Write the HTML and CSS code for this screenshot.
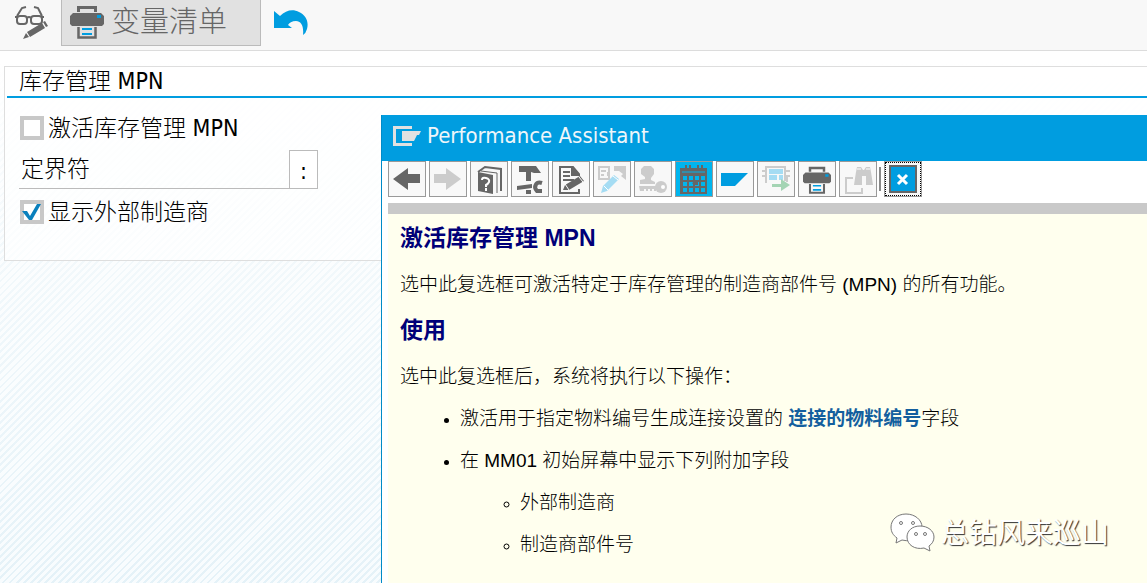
FILE: index.html
```html
<!DOCTYPE html>
<html lang="zh-CN">
<head>
<meta charset="utf-8">
<title>库存管理 MPN</title>
<link rel="stylesheet" href="styles.css">
</head>
<body>
<svg class="defs" aria-hidden="true">
  <symbol id="printer" viewBox="0 0 34 34">
    <path fill="#666" d="M7 7V1h20v6h-3V4H10v3zM3 8h28l3 3v8l-2 2h-3H5H2l-2-2v-8z"/>
    <path fill="#009de0" d="M27 10h4v3h-4zM12 23h10v2H12zM12 28h10v2H12z"/>
    <path fill="none" stroke="#666" stroke-width="2.500" d="M8.500 22v10.500h17V22"/>
  </symbol>
</svg>
<header class="toolbar">
  <button class="tool" aria-label="显示/更改">
    <svg width="34" height="36" viewBox="0 0 34 36" fill="none" stroke="#666" stroke-width="2">
      <path d="M2 12 7 4l4-1M27 12l-4-8-4-1"/>
      <rect x="2" y="12" width="10" height="8" rx="3"/><rect x="16" y="12" width="11" height="8" rx="3"/>
      <path d="M0 13h3M12 14q2-2 4 0M27 13h2"/>
      <path fill="#666" stroke="none" d="m12 28 15-9 3 5-15 9zM28 18l2-1 3 5-2 1zM11 29l3 4-6 2z"/>
    </svg>
  </button>
  <button class="variant"><svg width="34" height="34"><use href="#printer"/></svg><span>变量清单</span></button>
  <button class="tool undo" aria-label="撤销">
    <svg width="34" height="26" viewBox="0 0 34 26"><path fill="#009de0" d="M0 1l6 5C12 0 19-1 25 2c7 3 10 10 8 17q-1 4-4 6c1-9-2-14-7-14-4 0-7 2-8 4l4 3H0z"/></svg>
  </button>
</header>
<main class="group">
  <h1 class="group-title">库存管理 MPN</h1>
  <div class="fields">
    <label class="check-row"><span class="check"><input type="checkbox"></span><span class="caption">激活库存管理 MPN</span></label>
    <div class="text-row"><label for="delimiter">定界符</label><input id="delimiter" type="text" value=":"></div>
    <label class="check-row"><span class="check"><input type="checkbox" checked><svg viewBox="0 0 24 24"><path fill="#0a80bd" d="M2 11h5l3 5 7-12h4L12 20H9z"/></svg></span><span class="caption">显示外部制造商</span></label>
  </div>
</main>
<section class="assistant" aria-label="Performance Assistant">
  <header class="assistant-title">
    <svg width="28" height="20" viewBox="0 0 28 20"><path fill="#e1e1e1" d="M0 0h19v3H3v14h16v3H0zM9 5h19l-2 4h-2l-3 6H9z"/></svg>
    <h2>Performance Assistant</h2>
  </header>
  <div class="icons">
    <button aria-label="后退"><svg viewBox="0 0 32 32"><path fill="#666" d="M2 16 17 5v6h12v9H17v7z"/></svg></button>
    <button aria-label="前进" disabled><svg viewBox="0 0 32 32"><path fill="#ccc" d="M29 16 14 5v6H2v9h12v7z"/></svg></button>
    <button aria-label="帮助"><svg viewBox="0 0 32 32"><path fill="#666" d="M5 9l15 3v19L5 28z"/><path fill="none" stroke="#666" stroke-width="2" d="m5 9 7-5 16 2v22"/><path fill="none" stroke="#666" d="m8 8 16 2v20"/><path fill="none" stroke="#fff" stroke-width="2" d="M9 17q0-3 4-2 4 1 3 4-1 2-3 3v2M13 25v3"/></svg></button>
    <button aria-label="工具"><svg viewBox="0 0 32 32"><path fill="#666" d="M5 3h17l5 7h-7l-3-1v9h-5V9H5zM12 27h5v4h-5zM3 23l15-2v4L3 27z"/><path fill="none" stroke="#666" stroke-width="4" d="M28 20c-6-2-9 4-5 8h5"/></svg></button>
    <button aria-label="编辑"><svg viewBox="0 0 32 32"><path fill="none" stroke="#666" stroke-width="2" d="M5 4h13l6 7v2M5 3v27h19v-4M17 4v8h7"/><path fill="#666" d="M18 4v8h7zM8 8h7v2H8zM8 12h7v2H8zM8 16h11v2H8zM8 27l2-5 15-9 4 5-15 9z"/><path stroke="#fff" d="m10 21 4 6M24 14l4 5"/></svg></button>
    <button aria-label="转换" disabled><svg viewBox="0 0 32 32"><path fill="none" stroke="#ccc" stroke-width="2" d="M3 4h10v12H3zM5 8h5M5 12h3"/><path fill="#ccc" d="M18 3h12v14l-5-4 2-2-4-3h-5zM11 9h2v4h-2z"/><path fill="#a5dcf3" d="m5 30 2-7 11-11 5 4L11 28z"/><path stroke="#fff" d="m17 13 5 4M8 23l4 4"/></svg></button>
    <button aria-label="权限" disabled><svg viewBox="0 0 32 32"><path fill="#ccc" d="M7 3h7l3 3v5l-3 4v2l4 2v2H3v-4l5-1v-2l-4-3V6zM2 23h19v3h-2v2h-2v-2h-2v2h-2v-2h-2v2H9v-2H7v2H3z"/><circle cx="24" cy="24" r="6" fill="#ccc"/><circle cx="26" cy="24" r="2" fill="#fff"/></svg></button>
    <button class="active" aria-label="日历"><svg viewBox="0 0 32 32"><path fill="#666" d="M2 5h27v26H2zM7 2h2v5H7zM11 2h2v5h-2zM19 2h2v5h-2zM23 2h2v5h-2z"/><path fill="none" stroke="#00b5ee" stroke-width="4" stroke-dasharray="4 2" d="M5 15h22M5 21h22M5 27h22"/><path fill="none" stroke="#00b5ee" d="M4 9h23"/><path fill="#666" d="m14 20 6-3v5h-4z"/></svg></button>
    <button aria-label="标记"><svg viewBox="0 0 32 32"><path fill="#009de0" d="M2 10h27L16 23H2z"/></svg></button>
    <button aria-label="导出" disabled><svg viewBox="0 0 32 32"><path fill="none" stroke="#ccc" stroke-width="2" d="M6 20V4h19v14M2 8h4M2 13h4v7M25 8h5M25 13h5M27 13v6"/><path fill="#a5dcf3" d="M9 6h14v5H9zM9 12h8v5H9zM19 12h4v5h-4z"/><path fill="#a4d4b4" d="M12 21h9v-5l9 6-9 6v-4h-9z"/></svg></button>
    <button aria-label="打印"><svg viewBox="0 0 32 32"><use href="#printer" x="2" y="3" width="28" height="28"/></svg></button>
    <button aria-label="查找" disabled><svg viewBox="0 0 32 32"><path fill="none" stroke="#ccc" stroke-width="2" d="M11 15H4v15h16v-5"/><path fill="#ccc" d="m12 22 2-13 1-5h4l2 3h1l2-3h4l1 5 2 13h-7v-9h-4v9z"/><path stroke="#fff" d="M15 6h4M24 6h4"/></svg></button>
    <span class="divider"></span>
    <button class="close" aria-label="关闭"><svg viewBox="0 0 32 32"><path fill="#009de0" stroke="#666" stroke-width="2" d="M3 3h26v26H3z"/><path stroke="#fff" stroke-width="3" d="m11 12 9 9M20 12l-9 9"/></svg></button>
  </div>
  <article class="help">
    <h3>激活库存管理 MPN</h3>
    <p>选中此复选框可激活特定于库存管理的制造商部件号 (MPN) 的所有功能。</p>
    <h3 class="next">使用</h3>
    <p>选中此复选框后，系统将执行以下操作：</p>
    <ul>
      <li>激活用于指定物料编号生成连接设置的 <a href="#material">连接的物料编号</a>字段</li>
      <li>在 MM01 初始屏幕中显示下列附加字段
        <ul><li>外部制造商</li><li>制造商部件号</li></ul>
      </li>
    </ul>
  </article>
</section>
<div class="watermark">
  <svg width="46" height="40" viewBox="0 0 46 40" fill="#fff" stroke="#777" stroke-width="1">
    <path d="M16 1C7 1 1 7 1 14c0 5 2 8 6 11l-1 5 6-3c12 3 20-4 20-13C32 7 25 1 16 1z"/>
    <circle cx="11" cy="10" r="1.500"/><circle cx="23" cy="10" r="1.500"/>
    <path d="M30 13c-8 0-13 5-13 11 0 8 8 13 17 11l6 3-1-5c3-2 5-5 5-9 0-6-6-11-14-11z"/>
    <circle cx="26" cy="21" r="1.500"/><circle cx="35" cy="21" r="1.500"/>
  </svg>
  <span>总钻风来巡山</span>
</div>
</body>
</html>
```
FILE: styles.css
```css
* { box-sizing: border-box; }
body {
  margin: 0;
  min-height: 100vh;
  position: relative;
  overflow: hidden;
  color: #000;
  font: 300 23px/32px "DejaVu Sans Condensed", "Noto Sans CJK SC", sans-serif;
  background:
    linear-gradient(#fff 60px, #ffffff80 260px, #ffffff00 100%),
    repeating-linear-gradient(135deg, #f8fcfe 0 3px, #e5f2f8 3px 5px);
}
h1, h2, h3, p, ul { margin: 0; padding: 0; }
button, input { font: inherit; margin: 0; }
.defs { position: absolute; width: 0; height: 0; }
.toolbar {
  display: flex;
  align-items: flex-start;
  height: 51px;
  background: #f8f8f8;
  border-bottom: 1px solid #dcdcdc;
}
.tool { display: flex; width: 61px; padding: 4px 0 0 15px; border: 0; background: none; }
.tool.undo { padding: 10px 0 0 13px; }
.variant {
  display: flex;
  align-items: center;
  gap: 7px;
  width: 200px;
  height: 46px;
  padding: 0 8px 2px;
  border: 1px solid #bbb;
  border-top: 0;
  background: #e1e1e1;
  color: #666;
  font-size: 29px;
}
.group {
  margin: 15px 0 0 4px;
  height: 195px;
  border: 1px solid #dedede;
  border-right: 0;
  background: #ffffffa0;
}
.group-title {
  height: 31px;
  margin-left: 2px;
  padding-left: 12px;
  border-bottom: 2px solid #009de0;
  font-size: 23px;
  font-weight: 300;
  line-height: 28px;
}
.fields { padding: 9px 0 0 15px; }
.check-row { display: flex; align-items: center; gap: 4px; height: 42px; }
.caption { padding-bottom: 1px; }
.check { display: grid; width: 24px; height: 24px; }
.check > * { grid-area: 1 / 1; }
.check input { appearance: none; border: 4px solid #c8c8c8; background: #fff; }
.text-row { display: flex; width: 298px; height: 42px; padding-bottom: 2px; }
.text-row label { flex: 1; padding-left: 2px; margin: 1px 0 0 -1px; border-bottom: 1px solid #bbb; line-height: 38px; }
.text-row input { width: 29px; margin-top: 1px; padding: 2px 0 0; border: 1px solid #bbb; background: #fff; text-align: center; }
.assistant {
  position: absolute;
  inset: 115px 0 0 381px;
  display: flex;
  flex-direction: column;
  border-left: 1px solid #008bc8;
  background: #fff;
}
.assistant-title { display: flex; align-items: center; gap: 6px; height: 46px; padding: 0 0 5px 11px; background: #009de0; color: #eef6fa; }
.assistant-title h2 { font-size: 22px; font-weight: 400; }
.icons { display: flex; align-items: center; gap: 3px; height: 42px; padding: 0 0 6px 6px; }
.icons button { display: grid; place-items: center; width: 38px; height: 36px; padding: 0; border: 1px solid #999; background: #f8f8f8; }
.icons svg { width: 32px; height: 32px; }
.icons .active { background: #00b5ee; }
.icons .close { outline: 1px dotted #000; outline-offset: -2px; }
.divider { width: 2px; height: 24px; margin-left: -1px; background: #888; }
.help {
  flex: 1;
  margin-left: 6px;
  padding: 10px 0 0 12px;
  border-top: 11px solid #c9c9c9;
  background: #ffffee;
  font: 300 19px/24px "Liberation Sans", "Noto Sans CJK SC", sans-serif;
}
.help h3 { color: #000078; font-size: 23px; font-weight: 700; line-height: 28px; }
.help h3.next { margin-top: 19px; }
.help p { margin-top: 21px; }
.help ul { padding-left: 60px; }
.help li { margin-top: 18px; }
.help li::marker { font-size: 16px; }
.help a { color: #145f9e; font-weight: 700; text-decoration: none; }
.watermark {
  position: absolute;
  right: 38px;
  bottom: 30px;
  display: flex;
  align-items: center;
  gap: 5px;
  color: #fff;
  font: 400 28px/36px "Noto Sans CJK SC", sans-serif;
  text-shadow: 1px 1px 1px #333;
}
.watermark span { padding-bottom: 4px; }
```
